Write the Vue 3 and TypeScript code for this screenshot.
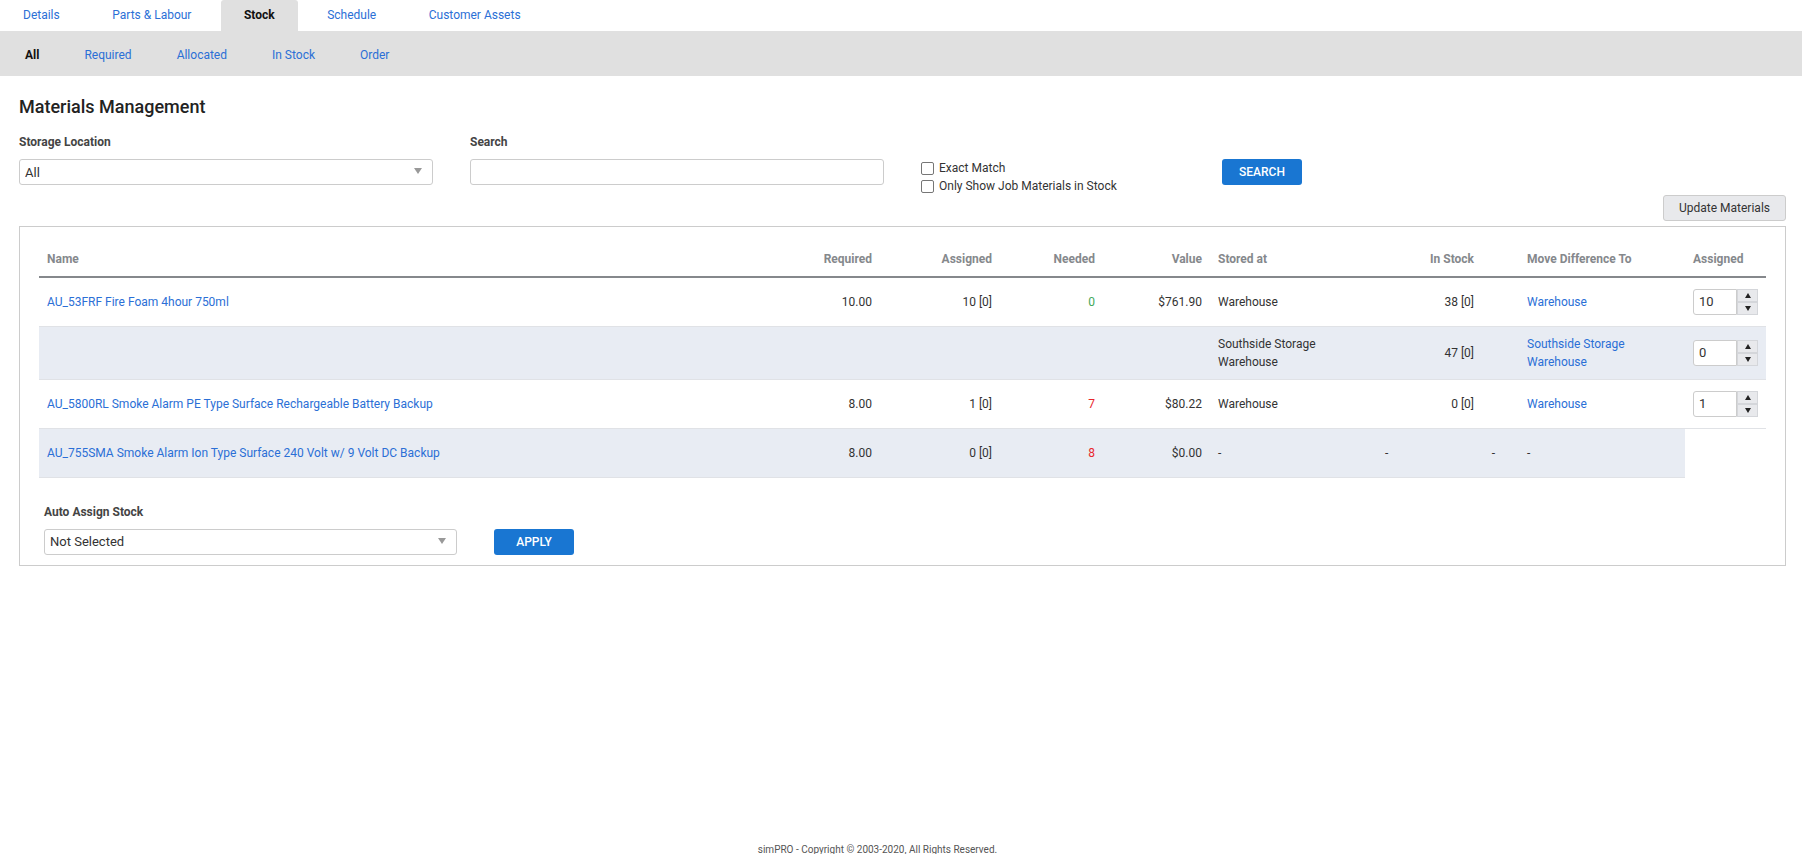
<script setup lang="ts">
import { ref } from "vue";

type Row = {
  name?: string;
  required?: string;
  assigned?: string;
  needed?: string;
  neededClass?: string;
  value?: string;
  stored: string[];
  inStock: string;
  moveTo: string[];
  qty?: number;
  tint?: boolean;
  tall?: boolean;
};

const tabs = ["Details", "Parts & Labour", "Stock", "Schedule", "Customer Assets"];
const subTabs = ["All", "Required", "Allocated", "In Stock", "Order"];
const activeTab = ref("Stock");
const activeSub = ref("All");

const rows: Row[] = [
  {
    name: "AU_53FRF Fire Foam 4hour 750ml",
    required: "10.00",
    assigned: "10 [0]",
    needed: "0",
    neededClass: "ok",
    value: "$761.90",
    stored: ["Warehouse"],
    inStock: "38 [0]",
    moveTo: ["Warehouse"],
    qty: 10,
  },
  {
    stored: ["Southside Storage", "Warehouse"],
    inStock: "47 [0]",
    moveTo: ["Southside Storage", "Warehouse"],
    qty: 0,
    tint: true,
    tall: true,
  },
  {
    name: "AU_5800RL Smoke Alarm PE Type Surface Rechargeable Battery Backup",
    required: "8.00",
    assigned: "1 [0]",
    needed: "7",
    neededClass: "bad",
    value: "$80.22",
    stored: ["Warehouse"],
    inStock: "0 [0]",
    moveTo: ["Warehouse"],
    qty: 1,
  },
];

const columns = [721, 120, 120, 103, 107, 167, 23, 119, 166, 81];
</script>

<template>
  <div class="page">
    <nav class="tabs">
      <a v-for="tab in tabs" :key="tab" class="tab" :class="{ active: activeTab === tab }">{{ tab }}</a>
    </nav>
    <nav class="subtabs">
      <a v-for="sub in subTabs" :key="sub" class="subtab" :class="{ active: activeSub === sub }">{{ sub }}</a>
    </nav>

    <main class="content">
      <h1>Materials Management</h1>

      <div class="filters">
        <div class="field">
          <label>Storage Location</label>
          <div class="select-wrap">
            <select><option>All</option></select>
            <span class="caret"></span>
          </div>
        </div>
        <div class="field">
          <label>Search</label>
          <input class="text-input" type="text" />
        </div>
        <div class="checks">
          <label><input type="checkbox" />Exact Match</label>
          <label><input type="checkbox" />Only Show Job Materials in Stock</label>
        </div>
        <button type="button" class="primary">SEARCH</button>
      </div>

      <div class="update-row">
        <button type="button" class="secondary">Update Materials</button>
      </div>

      <section class="box">
        <table>
          <colgroup>
            <col v-for="(w, i) in columns" :key="i" :style="{ width: w + 'px' }" />
          </colgroup>
          <thead>
            <tr>
              <th>Name</th>
              <th class="num">Required</th>
              <th class="num">Assigned</th>
              <th class="num">Needed</th>
              <th class="num">Value</th>
              <th colspan="2">Stored at</th>
              <th class="num stock">In Stock</th>
              <th>Move Difference To</th>
              <th>Assigned</th>
            </tr>
          </thead>
          <tbody>
            <tr v-for="(row, i) in rows" :key="i" :class="{ tint: row.tint, tall: row.tall }">
              <td><a>{{ row.name }}</a></td>
              <td class="num">{{ row.required }}</td>
              <td class="num">{{ row.assigned }}</td>
              <td class="num" :class="row.neededClass">{{ row.needed }}</td>
              <td class="num">{{ row.value }}</td>
              <td colspan="2"><div v-for="s in row.stored" :key="s">{{ s }}</div></td>
              <td class="num stock">{{ row.inStock }}</td>
              <td><a v-for="m in row.moveTo" :key="m" class="block">{{ m }}</a></td>
              <td>
                <div class="spinner">
                  <input type="text" :value="row.qty" />
                  <div class="spin-btns">
                    <span><i class="up"></i></span>
                    <span><i class="down"></i></span>
                  </div>
                </div>
              </td>
            </tr>
            <tr class="tint">
              <td><a>AU_755SMA Smoke Alarm Ion Type Surface 240 Volt w/ 9 Volt DC Backup</a></td>
              <td class="num">8.00</td>
              <td class="num">0 [0]</td>
              <td class="num bad">8</td>
              <td class="num">$0.00</td>
              <td>-</td>
              <td>-</td>
              <td class="num dash">-</td>
              <td>-</td>
            </tr>
          </tbody>
        </table>

        <div class="auto-assign">
          <label>Auto Assign Stock</label>
          <div class="auto-row">
            <div class="select-wrap">
              <select><option>Not Selected</option></select>
              <span class="caret"></span>
            </div>
            <button type="button" class="primary">APPLY</button>
          </div>
        </div>
      </section>
    </main>

    <footer class="footer">simPRO - Copyright © 2003-2020, All Rights Reserved.</footer>
  </div>
</template>

<style scoped>
.page {
  height: 854px;
  overflow: hidden;
  display: flex;
  flex-direction: column;
  font-family: Roboto, "Liberation Sans", sans-serif;
  font-size: 12px;
  color: #333;
  background: #fff;
}

a {
  color: #2b6fd6;
}

.tabs {
  display: flex;
  gap: 6.5px;
  height: 31px;
}

.tab {
  padding: 0 23px;
  line-height: 31px;
  border-radius: 3px 3px 0 0;
}

.tab.active {
  background: #e0e0e0;
  color: #111;
  font-weight: 700;
}

.subtabs {
  display: flex;
  gap: 45px;
  height: 45px;
  padding-left: 25px;
  background: #e0e0e0;
}

.subtab {
  line-height: 48px;
}

.subtab.active {
  color: #111;
  font-weight: 700;
}

.content {
  padding: 0 16px 0 19px;
}

h1 {
  margin: 0;
  padding-top: 20px;
  font-size: 18px;
  line-height: 21px;
  font-weight: 500;
  color: #222;
}

.filters {
  display: flex;
  align-items: flex-start;
  gap: 37px;
  margin-top: 16px;
  height: 62px;
}

.field {
  width: 414px;
}

label {
  display: block;
}

.field > label,
.auto-assign > label {
  font-weight: 700;
  color: #444;
  line-height: 18px;
  margin-bottom: 8px;
}

.select-wrap {
  position: relative;
  width: 414px;
}

.auto-row .select-wrap {
  width: 413px;
}

select,
.text-input {
  display: block;
  box-sizing: border-box;
  width: 100%;
  height: 26px;
  padding: 0 5px;
  border: 1px solid #ccc;
  border-radius: 3px;
  background: #fff;
  font: 13px Roboto, "Liberation Sans", sans-serif;
  color: #333;
  appearance: none;
  outline: none;
}

.caret {
  position: absolute;
  top: 9px;
  right: 11px;
  border-left: 4px solid transparent;
  border-right: 4px solid transparent;
  border-top: 6px solid #999;
}

.checks {
  width: 264px;
  padding-top: 26px;
}

.checks label {
  display: flex;
  align-items: center;
  height: 18px;
  color: #333;
}

.checks input {
  box-sizing: border-box;
  width: 13px;
  height: 13px;
  margin: 0 5px 0 0;
  border: 1px solid #767676;
  border-radius: 2px;
  background: #fff;
  appearance: none;
}

button {
  font-family: Roboto, "Liberation Sans", sans-serif;
  font-size: 12px;
  cursor: pointer;
}

.primary {
  width: 80px;
  height: 26px;
  border: 0;
  border-radius: 3px;
  background: #1976d2;
  color: #fff;
  font-weight: 500;
}

.filters .primary {
  margin-top: 26px;
}

.update-row {
  display: flex;
  justify-content: flex-end;
  margin-bottom: 5px;
}

.secondary {
  height: 26px;
  width: 123px;
  border: 1px solid #ccc;
  border-radius: 3px;
  background: #e8e9ec;
  color: #333;
}

.box {
  box-sizing: border-box;
  height: 340px;
  padding: 0 19px;
  border: 1px solid #ccc;
}

table {
  table-layout: fixed;
  width: 1727px;
  border-collapse: collapse;
}

th {
  height: 50px;
  padding: 15px 8px 0;
  box-sizing: border-box;
  border-bottom: 2px solid #85888c;
  text-align: left;
  font-weight: 700;
  color: #85888c;
  white-space: nowrap;
}

td {
  height: 49px;
  padding: 0 8px;
  box-sizing: border-box;
  border-bottom: 1px solid #e0e2e6;
  line-height: 18px;
  white-space: nowrap;
}

tr.tall td {
  height: 53px;
}

tr.tint td {
  background: #e8ecf3;
}

.num {
  text-align: right;
}

.num.stock {
  padding-right: 45px;
}

.num.dash {
  padding-right: 24px;
}

.block {
  display: block;
}

.ok {
  color: #43a85a;
}

.bad {
  color: #e8262c;
}

.spinner {
  display: flex;
  width: 65px;
  height: 26px;
}

.spinner input {
  box-sizing: border-box;
  width: 44px;
  height: 26px;
  padding: 0 5px;
  border: 1px solid #ccc;
  border-radius: 3px 0 0 3px;
  background: #fff;
  font: 13px Roboto, "Liberation Sans", sans-serif;
  color: #333;
  outline: none;
}

.spin-btns {
  display: flex;
  flex-direction: column;
  width: 21px;
}

.spin-btns span {
  display: flex;
  align-items: center;
  justify-content: center;
  box-sizing: border-box;
  height: 13px;
  border: 1px solid #d4d6da;
  background: #e8e9ec;
}

.up {
  border-left: 3.5px solid transparent;
  border-right: 3.5px solid transparent;
  border-bottom: 5px solid #222;
}

.down {
  border-left: 3.5px solid transparent;
  border-right: 3.5px solid transparent;
  border-top: 5px solid #222;
}

.auto-assign {
  margin-top: 25px;
  padding-left: 5px;
}

.auto-row {
  display: flex;
  gap: 37px;
}

.footer {
  margin-top: auto;
  padding-right: 47px;
  height: 10px;
  line-height: 12px;
  text-align: center;
  font-size: 10px;
  color: #555;
}
</style>

<style>
html,
body {
  margin: 0;
  overflow: hidden;
}
</style>
